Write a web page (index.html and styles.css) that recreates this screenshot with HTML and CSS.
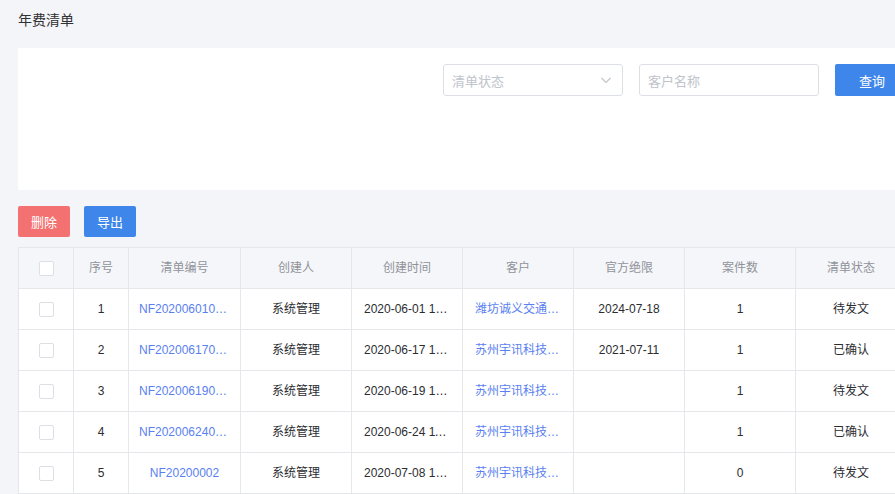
FILE: index.html
```html
<!DOCTYPE html>
<html lang="zh">
<head>
<meta charset="utf-8">
<title>年费清单</title>
<link rel="stylesheet" href="styles.css">
</head>
<body>
<div class="page">
  <h1 class="title">年费清单</h1>
  <div class="panel">
    <div class="filters">
      <div class="field select">
        <span class="placeholder">清单状态</span>
        <svg class="arrow" width="12" height="12" viewBox="0 0 12 12"><path d="M1.5 4 L6 8.5 L10.5 4" fill="none" stroke="#c0c4cc" stroke-width="1.2"/></svg>
      </div>
      <div class="field">
        <span class="placeholder">客户名称</span>
      </div>
      <button class="btn btn-primary btn-query">查询</button>
    </div>
  </div>
  <div class="actions">
    <button class="btn btn-danger">删除</button>
    <button class="btn btn-primary">导出</button>
  </div>
  <table class="grid">
    <colgroup>
      <col class="c-check"><col class="c-idx"><col class="c-no"><col class="c-m"><col class="c-m"><col class="c-m"><col class="c-m"><col class="c-m"><col class="c-m">
    </colgroup>
    <thead>
      <tr>
        <th><span class="checkbox"></span></th>
        <th>序号</th>
        <th>清单编号</th>
        <th>创建人</th>
        <th>创建时间</th>
        <th>客户</th>
        <th>官方绝限</th>
        <th>案件数</th>
        <th>清单状态</th>
      </tr>
    </thead>
    <tbody>
      <tr>
        <td><span class="checkbox"></span></td>
        <td>1</td>
        <td class="link code">NF202006010001</td>
        <td>系统管理</td>
        <td>2020-06-01 10:21:35</td>
        <td class="link">潍坊诚义交通设施有限公司</td>
        <td>2024-07-18</td>
        <td>1</td>
        <td>待发文</td>
      </tr>
      <tr>
        <td><span class="checkbox"></span></td>
        <td>2</td>
        <td class="link code">NF202006170001</td>
        <td>系统管理</td>
        <td>2020-06-17 14:08:12</td>
        <td class="link">苏州宇讯科技有限公司</td>
        <td>2021-07-11</td>
        <td>1</td>
        <td>已确认</td>
      </tr>
      <tr>
        <td><span class="checkbox"></span></td>
        <td>3</td>
        <td class="link code">NF202006190001</td>
        <td>系统管理</td>
        <td>2020-06-19 16:45:50</td>
        <td class="link">苏州宇讯科技有限公司</td>
        <td></td>
        <td>1</td>
        <td>待发文</td>
      </tr>
      <tr>
        <td><span class="checkbox"></span></td>
        <td>4</td>
        <td class="link code">NF202006240001</td>
        <td>系统管理</td>
        <td>2020-06-24 11:30:02</td>
        <td class="link">苏州宇讯科技有限公司</td>
        <td></td>
        <td>1</td>
        <td>已确认</td>
      </tr>
      <tr>
        <td><span class="checkbox"></span></td>
        <td>5</td>
        <td class="link code">NF20200002</td>
        <td>系统管理</td>
        <td>2020-07-08 15:12:44</td>
        <td class="link">苏州宇讯科技有限公司</td>
        <td></td>
        <td>0</td>
        <td>待发文</td>
      </tr>
    </tbody>
  </table>
</div>
</body>
</html>
```

FILE: styles.css
```css
html, body {
  margin: 0;
  padding: 0;
  overflow: hidden;
  background: #f4f5f8;
}
body {
  font-family: "Liberation Sans", "Noto Sans CJK SC", sans-serif;
  font-size: 12px;
  color: #333;
}
.page {
  width: 1000px;
  padding: 0 0 0 18px;
}
.title {
  margin: 0;
  height: 48px;
  line-height: 41px;
  font-size: 14px;
  font-weight: normal;
  color: #303133;
}
.panel {
  background: #fff;
  height: 142px;
  box-sizing: border-box;
  padding: 16px 0 0 425px;
}
.filters {
  display: flex;
  gap: 16px;
  align-items: flex-start;
}
.field {
  width: 180px;
  height: 32px;
  box-sizing: border-box;
  border: 1px solid #dcdfe6;
  border-radius: 3px;
  display: flex;
  align-items: center;
  padding: 0 8px;
  justify-content: space-between;
}
.placeholder {
  color: #c0c4cc;
  font-size: 13px;
}
.arrow {
  margin-right: 2px;
}
.btn {
  border: none;
  border-radius: 2px;
  color: #fff;
  font-family: inherit;
  font-size: 13px;
  height: 31px;
  width: 52px;
  padding: 0;
  cursor: pointer;
}
.btn-primary {
  background: #3e86ea;
}
.btn-danger {
  background: #f47171;
}
.btn-query {
  width: 74px;
  height: 32px;
}
.actions {
  display: flex;
  gap: 14px;
  padding: 16px 0 10px;
}
.grid {
  border-collapse: collapse;
  table-layout: fixed;
  width: 888px;
  background: #fff;
}
.c-check { width: 55px; }
.c-idx { width: 55px; }
.c-no { width: 112px; }
.c-m { width: 111px; }
.grid th, .grid td {
  border: 1px solid #e6e7ea;
  height: 41px;
  box-sizing: border-box;
  padding: 0 12px 1px;
  line-height: 16px;
  text-align: center;
  white-space: nowrap;
  overflow: hidden;
  text-overflow: ellipsis;
  font-size: 12px;
}
.grid th {
  background: #f5f6f9;
  color: #909399;
  font-weight: normal;
}
.grid td {
  color: #2b2d31;
}
.grid td.link {
  color: #5a7ff0;
}
.grid td.code {
  padding-left: 10px;
  padding-right: 10px;
}
.checkbox {
  display: inline-block;
  width: 13px;
  height: 13px;
  border: 1px solid #dcdfe6;
  border-radius: 2px;
  background: #fff;
  vertical-align: middle;
}
```
